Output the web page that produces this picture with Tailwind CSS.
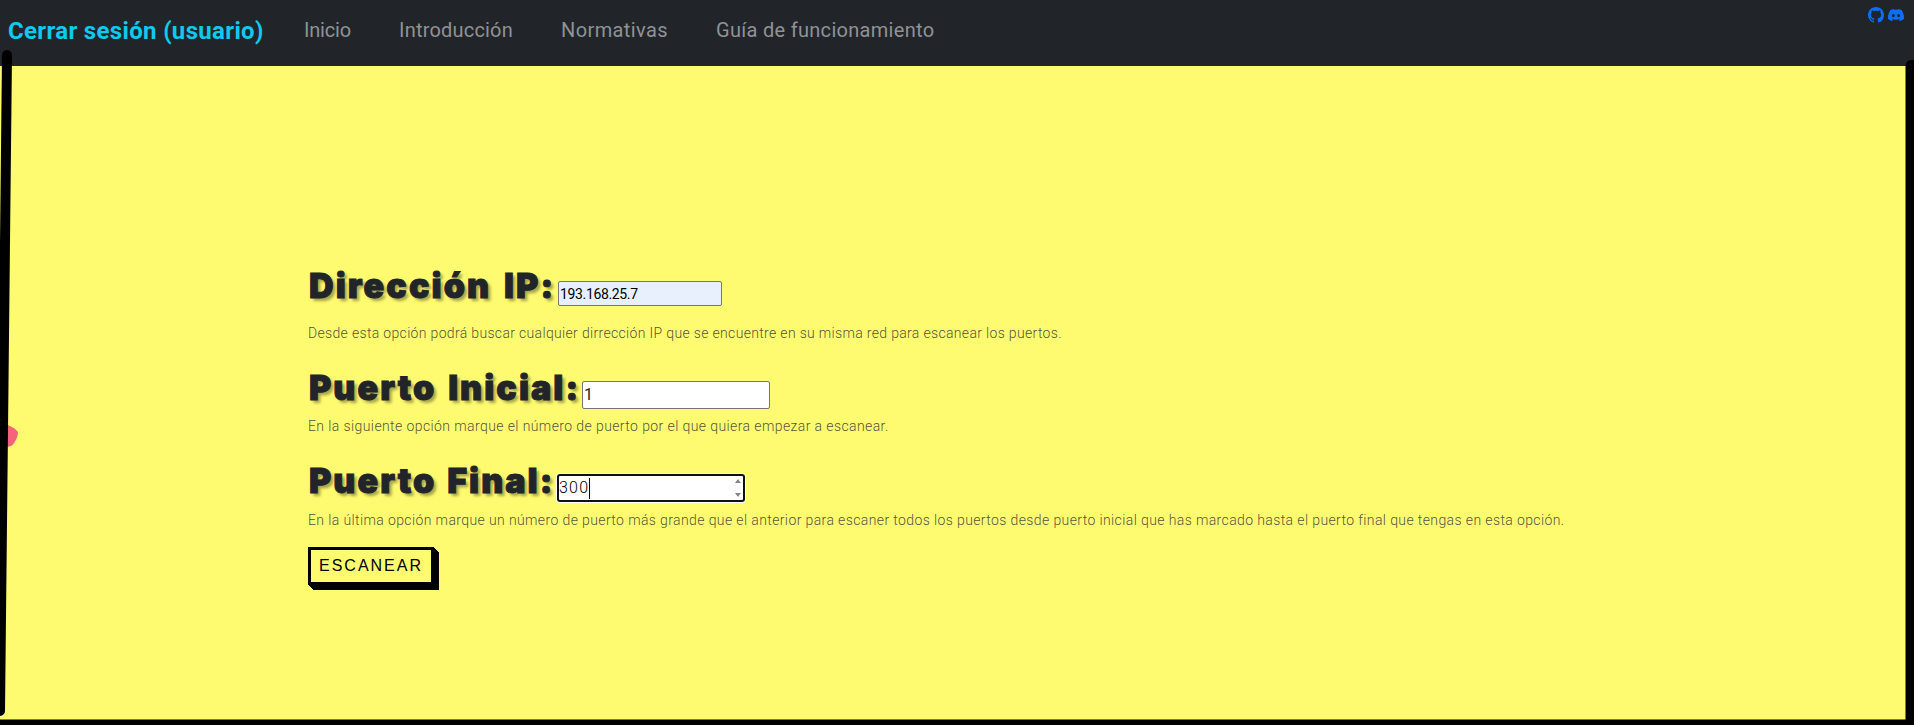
<!DOCTYPE html>
<html lang="es">
<head>
<meta charset="utf-8">
<title>Escáner de puertos</title>
<script src="https://cdn.jsdelivr.net/npm/@tailwindcss/browser@4"></script>
</head>
<body class="relative h-[725px] overflow-hidden bg-[#fffb70] font-['Roboto',sans-serif]">
<header class="flex h-[66px] items-start justify-between bg-[#212529] pl-2 pr-[10px]">
  <div class="flex h-[60px] items-center whitespace-nowrap text-xl leading-none text-[#909294]">
    <a class="w-[296px] pt-px text-2xl leading-none font-bold tracking-[0.34px] text-[#0dcaf0]">Cerrar sesión (usuario)</a>
    <a class="w-[95px] tracking-[-0.2px]">Inicio</a>
    <a class="w-[162px] tracking-[0.2px]">Introducción</a>
    <a class="w-[155px] tracking-[0.4px]">Normativas</a>
    <a class="tracking-[0.3px]">Guía de funcionamiento</a>
  </div>
  <div class="flex gap-1 pt-[7px] text-[#0d6efd]">
    <svg class="size-4" viewBox="0 0 16 16" fill="currentColor"><path d="M8 0C3.58 0 0 3.58 0 8c0 3.54 2.29 6.53 5.47 7.59.4.07.55-.17.55-.38 0-.19-.01-.82-.01-1.49-2.01.37-2.53-.49-2.69-.94-.09-.23-.48-.94-.82-1.13-.28-.15-.68-.52-.01-.53.63-.01 1.08.58 1.23.82.72 1.21 1.87.87 2.33.66.07-.52.28-.87.51-1.07-1.78-.2-3.64-.89-3.64-3.95 0-.87.31-1.59.82-2.15-.08-.2-.36-1.02.08-2.12 0 0 .67-.21 2.2.82.64-.18 1.32-.27 2-.27s1.36.09 2 .27c1.53-1.04 2.2-.82 2.2-.82.44 1.1.16 1.92.08 2.12.51.56.82 1.27.82 2.15 0 3.07-1.87 3.75-3.65 3.95.29.25.54.73.54 1.48 0 1.07-.01 1.93-.01 2.2 0 .21.15.46.55.38A8.01 8.01 0 0 0 16 8c0-4.42-3.58-8-8-8"/></svg>
    <svg class="size-4" viewBox="0 0 16 16" fill="currentColor"><path d="M13.545 2.907a13.2 13.2 0 0 0-3.257-1.011.05.05 0 0 0-.052.025c-.141.25-.297.577-.406.833a12.2 12.2 0 0 0-3.658 0 8 8 0 0 0-.412-.833.05.05 0 0 0-.052-.025c-1.125.194-2.22.534-3.257 1.011a.04.04 0 0 0-.021.018C.356 6.024-.213 9.047.066 12.032q.003.022.021.037a13.3 13.3 0 0 0 3.995 2.02.05.05 0 0 0 .056-.019q.463-.63.818-1.329a.05.05 0 0 0-.028-.07 9 9 0 0 1-1.248-.595.05.05 0 0 1-.005-.085l.248-.194a.05.05 0 0 1 .051-.007c2.619 1.196 5.454 1.196 8.041 0a.05.05 0 0 1 .053.007l.248.195a.05.05 0 0 1-.004.085 8 8 0 0 1-1.249.594.05.05 0 0 0-.027.07c.24.465.515.909.817 1.329a.05.05 0 0 0 .056.019 13.2 13.2 0 0 0 4.001-2.02.05.05 0 0 0 .021-.037c.334-3.451-.559-6.449-2.366-9.106a.03.03 0 0 0-.02-.019m-8.198 7.307c-.789 0-1.438-.724-1.438-1.612s.637-1.613 1.438-1.613c.807 0 1.45.73 1.438 1.613 0 .888-.637 1.612-1.438 1.612m5.316 0c-.788 0-1.438-.724-1.438-1.612s.637-1.613 1.438-1.613c.807 0 1.451.73 1.438 1.613 0 .888-.631 1.612-1.438 1.612"/></svg>
  </div>
</header>
<main class="ml-[308px] flex flex-col whitespace-nowrap pt-[199px] text-[#212529]">
  <div class="flex h-[58px] items-start">
    <label class="w-[250px] pl-px font-['Inter',sans-serif] text-[34px] leading-[42px] font-black tracking-[2.1px] [word-spacing:4px] [-webkit-text-stroke:1px_#212529] [text-shadow:3px_3px_3px_rgba(0,0,0,0.35)]">Dirección IP:</label>
    <div class="mt-4 flex h-[25px] w-[164px] items-center rounded-xs border border-[#767676] bg-[#e8f0fe] pl-px text-sm tracking-[-0.35px] text-black">193.168.25.7</div>
  </div>
  <p class="h-[44px] text-sm leading-5 font-light tracking-[0.33px] text-[#212529]/80">Desde esta opción podrá buscar cualquier dirrección IP que se encuentre en su misma red para escanear los puertos.</p>
  <div class="flex h-[49px] items-start">
    <label class="w-[274px] pl-px font-['Inter',sans-serif] text-[34px] leading-[42px] font-black tracking-[2.05px] [word-spacing:3px] [-webkit-text-stroke:1px_#212529] [text-shadow:3px_3px_3px_rgba(0,0,0,0.35)]">Puerto Inicial:</label>
    <div class="mt-[14px] flex h-[28px] w-[188px] items-center rounded-xs border border-[#767676] bg-white pl-px text-base">1</div>
  </div>
  <p class="h-[44px] text-sm leading-5 font-light tracking-[0.4px] text-[#212529]/80">En la siguiente opción marque el número de puerto por el que quiera empezar a escanear.</p>
  <div class="flex h-[50px] items-start">
    <label class="w-[249px] pl-px font-['Inter',sans-serif] text-[34px] leading-[42px] font-black tracking-[2.05px] [word-spacing:2px] [-webkit-text-stroke:1px_#212529] [text-shadow:3px_3px_3px_rgba(0,0,0,0.35)]">Puerto Final:</label>
    <div class="mt-[14px] flex h-[28px] w-[188px] items-center justify-between rounded-[3px] border-2 border-[#101010] bg-white pr-[2px] text-base text-black ring-1 ring-white">
      <span class="flex items-center font-light tracking-[1.2px]">300<span class="h-[21px] w-px bg-black"></span></span>
      <svg class="h-[18px] w-[6px]" viewBox="0 0 6 18" fill="#858585"><path d="M0 4L3 0L6 4ZM0 14L3 18L6 14Z"/></svg>
    </div>
  </div>
  <p class="h-[37px] text-sm leading-5 font-light tracking-[0.385px] text-[#212529]/80">En la última opción marque un número de puerto más grande que el anterior para escaner todos los puertos desde puerto inicial que has marcado hasta el puerto final que tengas en esta opción.</p>
  <button class="flex h-[38px] w-[126px] items-center justify-center border-3 border-black font-['Liberation_Sans',sans-serif] text-base tracking-[2px] text-black shadow-[1px_1px_0_#000,2px_2px_0_#000,3px_3px_0_#000,4px_4px_0_#000,5px_5px_0_#000]">ESCANEAR</button>
</main>
<svg class="absolute inset-0 h-[725px] w-[1914px]" viewBox="0 0 1914 725">
  <path d="M7 425C11 426 18 430 18 433C18 436 14 445 11 446L7 447Z" fill="#f3637b"/>
  <path d="M7 55L0 711" stroke="#000" stroke-width="10" stroke-linecap="round"/>
  <path d="M1905.5 66Q1906 60 1911 60H1914V725H0V719.5H1905.5Z"/>
</svg>
</body>
</html>
